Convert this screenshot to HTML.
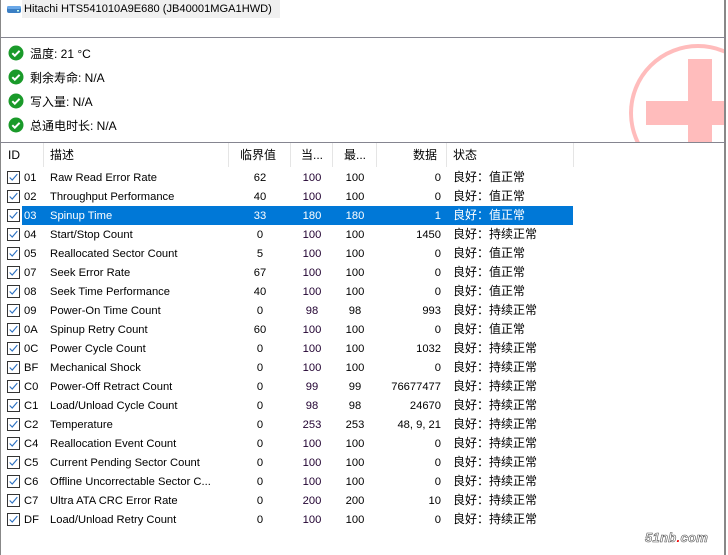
<!DOCTYPE html>
<html><head><meta charset="utf-8"><style>
*{margin:0;padding:0;box-sizing:border-box}
body{width:728px;height:555px;background:#fff;position:relative;overflow:hidden;font-family:"Liberation Sans","Noto Sans CJK SC",sans-serif;font-size:11.2px;color:#000}
.a{position:absolute;white-space:nowrap}
.row{position:absolute;left:0;width:574px;height:19px;line-height:19px}
.row .a{top:0}
.row .t{top:1px}
.sel{background:#0078d7;color:#fff}
.r{text-align:right}
.c{text-align:center}
.cb{position:absolute;left:7px;top:3px;width:13px;height:13px;border:1px solid #333;background:#fff}
.hd{position:absolute;top:143px;height:24px;line-height:24px;font-size:12px}
.sep{position:absolute;top:143px;width:1px;height:24px;background:#e5e5e5}
.st{position:absolute;left:30px;font-size:12px}
</style></head><body>
<div class="a" style="left:0;top:0;width:1px;height:555px;background:#888"></div>
<div class="a" style="left:724px;top:0;width:2px;height:555px;background:#888"></div>
<div class="a" style="left:0;top:37px;width:726px;height:1px;background:#858590"></div>
<div class="a" style="left:0;top:142px;width:726px;height:1px;background:#858590"></div>
<div class="a" style="left:22px;top:0;width:258px;height:18px;background:#f0f0f0"></div>
<svg class="a" style="left:7px;top:5px" width="14" height="9"><rect x="0" y="1" width="14" height="7" rx="2" fill="#3b7fc4"/><rect x="0" y="1" width="14" height="3" rx="1.5" fill="#6aa8e8"/><rect x="10" y="5" width="2" height="1.5" fill="#cfe"/></svg>
<div class="a" style="left:24px;top:0;line-height:18px;font-size:11.1px">Hitachi HTS541010A9E680 (JB40001MGA1HWD)</div>
<svg class="a" style="left:620px;top:38px" width="104" height="104"><circle cx="78" cy="75" r="67" fill="none" stroke="#ffbcbc" stroke-width="4"/><rect x="68" y="21" width="24" height="90" fill="#ffbcbc"/><rect x="26" y="63" width="80" height="24" fill="#ffbcbc"/></svg>
<svg width="0" height="0" style="position:absolute"><defs><symbol id="ok" viewBox="0 0 16 16"><circle cx="8" cy="8" r="7.5" fill="#1a9a2a"/><path d="M4.3 8.2l2.5 2.5 4.8-4.9" fill="none" stroke="#fff" stroke-width="2"/></symbol><symbol id="ck" viewBox="0 0 13 13"><path d="M2 6.5l3 3 6-7" fill="none" stroke="#2a6fc0" stroke-width="1.3"/></symbol></defs></svg>
<svg class="a" style="left:8px;top:45px" width="16" height="16"><use href="#ok"/></svg>
<svg class="a" style="left:8px;top:69px" width="16" height="16"><use href="#ok"/></svg>
<svg class="a" style="left:8px;top:93px" width="16" height="16"><use href="#ok"/></svg>
<svg class="a" style="left:8px;top:117px" width="16" height="16"><use href="#ok"/></svg>
<div class="a st" style="top:45px">温度: 21 °C</div>
<div class="a st" style="top:69px">剩余寿命: N/A</div>
<div class="a st" style="top:93px">写入量: N/A</div>
<div class="a st" style="top:117px">总通电时长: N/A</div>
<div class="hd" style="left:8px">ID</div>
<div class="hd" style="left:50px">描述</div>
<div class="hd" style="left:240px">临界值</div>
<div class="hd" style="left:301px">当...</div>
<div class="hd" style="left:344px">最...</div>
<div class="hd" style="left:413px">数据</div>
<div class="hd" style="left:453px">状态</div>
<div class="sep" style="left:43px"></div><div class="sep" style="left:228px"></div><div class="sep" style="left:290px"></div><div class="sep" style="left:332px"></div><div class="sep" style="left:376px"></div><div class="sep" style="left:446px"></div><div class="sep" style="left:573px"></div>
<div id="rows"></div>
<script>
var d=[["01","Raw Read Error Rate",62,100,100,"0","值正常"],["02","Throughput Performance",40,100,100,"0","值正常"],["03","Spinup Time",33,180,180,"1","值正常"],["04","Start/Stop Count",0,100,100,"1450","持续正常"],["05","Reallocated Sector Count",5,100,100,"0","值正常"],["07","Seek Error Rate",67,100,100,"0","值正常"],["08","Seek Time Performance",40,100,100,"0","值正常"],["09","Power-On Time Count",0,98,98,"993","持续正常"],["0A","Spinup Retry Count",60,100,100,"0","值正常"],["0C","Power Cycle Count",0,100,100,"1032","持续正常"],["BF","Mechanical Shock",0,100,100,"0","持续正常"],["C0","Power-Off Retract Count",0,99,99,"76677477","持续正常"],["C1","Load/Unload Cycle Count",0,98,98,"24670","持续正常"],["C2","Temperature",0,253,253,"48, 9, 21","持续正常"],["C4","Reallocation Event Count",0,100,100,"0","持续正常"],["C5","Current Pending Sector Count",0,100,100,"0","持续正常"],["C6","Offline Uncorrectable Sector C...",0,100,100,"0","持续正常"],["C7","Ultra ATA CRC Error Rate",0,200,200,"10","持续正常"],["DF","Load/Unload Retry Count",0,100,100,"0","持续正常"]];
var h="";
d.forEach(function(r,i){var s=i==2;var y=168+i*19;var col=s?'color:#fff;':'';
h+='<div class="row" style="top:'+y+'px">'+(s?'<div class="a sel" style="left:22px;width:551px;height:19px"></div>':'')+
'<div class="cb"><svg width="11" height="11" viewBox="0 0 13 13" style="position:absolute;left:0;top:0"><use href="#ck"/></svg></div>'+
'<div class="a t" style="left:24px;'+col+'">'+r[0]+'</div>'+
'<div class="a t" style="left:50px;'+col+'">'+r[1]+'</div>'+
'<div class="a c t" style="left:240px;width:40px;'+col+'">'+r[2]+'</div>'+
'<div class="a c t" style="left:292px;width:40px;color:'+(s?'#fff':'#200030')+'">'+r[3]+'</div>'+
'<div class="a c t" style="left:335px;width:40px;'+col+'">'+r[4]+'</div>'+
'<div class="a r t" style="left:370px;width:71px;'+col+'">'+r[5]+'</div>'+
'<div class="a" style="left:453px;font-size:12px;'+col+'">良好：'+r[6]+'</div></div>';});
document.getElementById("rows").innerHTML=h;
</script>
<div class="a" style="left:645px;top:530px;font:italic bold 13px 'Liberation Sans',sans-serif;color:#fff;-webkit-text-stroke:0.6px #555;letter-spacing:0.3px">51nb<span style="color:#e00;-webkit-text-stroke:0">.</span>com</div>
</body></html>
